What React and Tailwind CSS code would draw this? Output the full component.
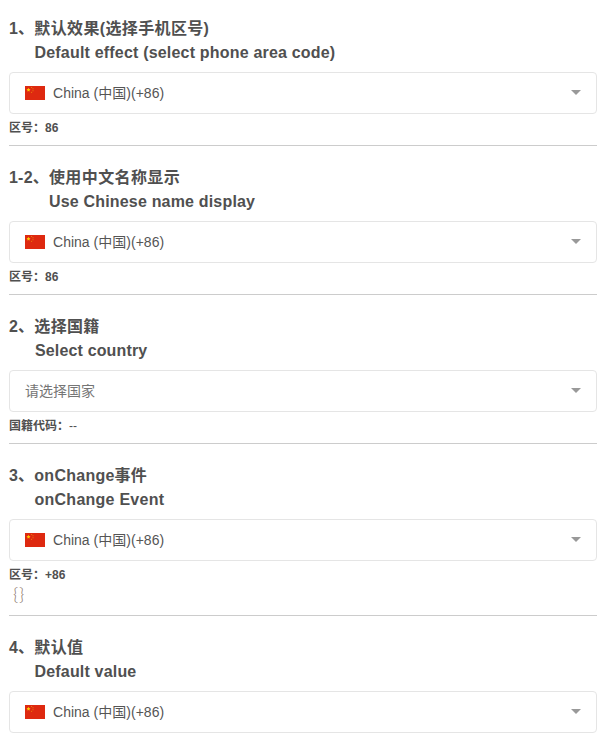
const sans = "font-['Liberation_Sans','Noto_Sans_CJK_SC',sans-serif]";

function Flag() {
  return (
    <svg width="20" height="14" viewBox="0 0 20 14" className="shrink-0">
      <rect width="20" height="14" fill="#de2910" />
      <path fill="#ffc800" d="M3.500 1.800l.6 1.200 1.400.2-1 1 .2 1.400-1.200-.7-1.200.7.2-1.400-1-1 1.400-.2z" />
      <g fill="#ee9a0a">
        <circle cx="6.600" cy="1.500" r=".5" />
        <circle cx="8" cy="2.800" r=".5" />
        <circle cx="8" cy="4.700" r=".5" />
        <circle cx="6.600" cy="6.200" r=".5" />
      </g>
    </svg>
  );
}

function Select({ empty }) {
  return (
    <div className="mt-[7px] flex h-[42px] items-center rounded border border-[#e5e5e5] px-[15px] text-sm text-[#555]">
      {empty ? (
        <span className="text-[#757575]">请选择国家</span>
      ) : (
        <>
          <Flag />
          <span className="ml-2 tracking-[0.02px]">China (中国)(+86)</span>
        </>
      )}
      <svg width="10" height="7" viewBox="0 0 10 7" className="ml-auto">
        <path d="M0 0h10L5 5z" fill="#999" />
      </svg>
    </div>
  );
}

function Section({ num, title, sub, titleClass, subClass, empty, label, value, braces, last }) {
  return (
    <section className={last ? "" : braces ? "h-[172px]" : "h-[149px]"}>
      <h3 className="text-base leading-6 font-bold">
        <div>
          <span className="tracking-[0.2px]">{num}</span>
          <span className={titleClass}>{title}</span>
        </div>
        <div className={subClass}>{sub}</div>
      </h3>
      <Select empty={empty} />
      {!last && (
        <div className={braces ? "h-[55px] border-b border-[#ccc]" : "h-8 border-b border-[#ccc]"}>
          <div className="pt-1 text-xs leading-5 font-bold">
            {label}
            <span className={empty ? "font-normal" : ""}>{value}</span>
          </div>
          {braces && (
            <div className="pl-1 font-['Lato',sans-serif] text-lg leading-4 font-light tracking-[0.7px] text-[#8a7468]">
              {"{}"}
            </div>
          )}
        </div>
      )}
    </section>
  );
}

export default function App() {
  return (
    <main className={`h-[740px] overflow-hidden bg-white pt-[17px] pr-[18px] pl-[9px] text-[#505050] ${sans}`}>
      <Section num="1、" title="默认效果(选择手机区号)" sub="Default effect (select phone area code)" titleClass="tracking-[0.36px]" subClass="pl-[25.5px] tracking-[0.19px]" label="区号：" value="86" />
      <Section num="1-2、" title="使用中文名称显示" sub="Use Chinese name display" titleClass="tracking-[0.4px]" subClass="pl-10 tracking-[0.18px]" label="区号：" value="86" />
      <Section num="2、" title="选择国籍" sub="Select country" titleClass="tracking-[0.35px]" subClass="pl-[26px] tracking-[0.15px]" label="国籍代码：" value="--" empty />
      <Section num="3、" title="onChange事件" sub="onChange Event" titleClass="tracking-[0.26px]" subClass="pl-[25.5px] tracking-[0.25px]" label="区号：" value="+86" braces />
      <Section num="4、" title="默认值" sub="Default value" titleClass="tracking-[0.4px]" subClass="pl-[25.5px] tracking-[0.18px]" last />
    </main>
  );
}
